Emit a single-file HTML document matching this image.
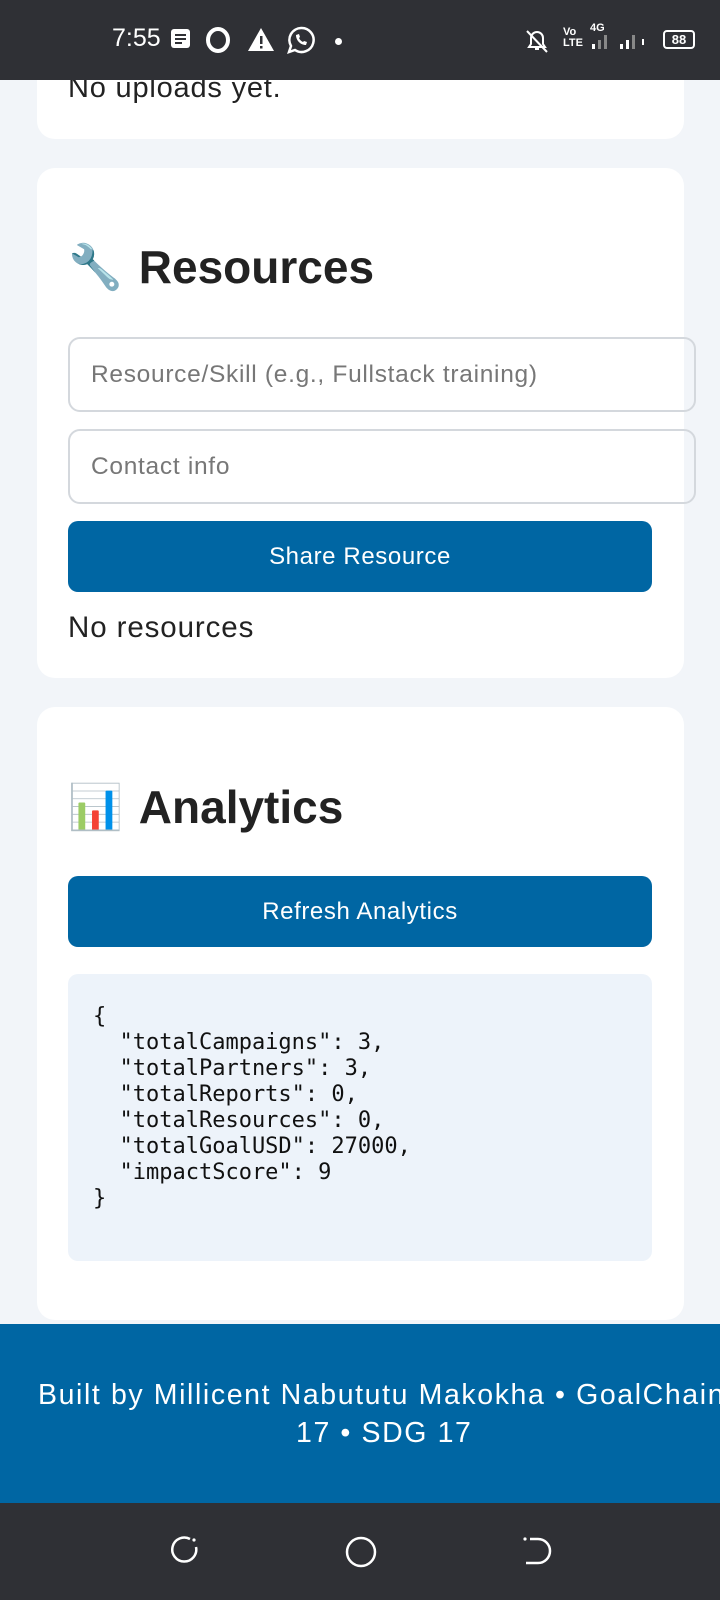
<!DOCTYPE html>
<html><head><meta charset="utf-8"><style>
*{box-sizing:border-box;margin:0;padding:0}
body{width:720px;height:1600px;overflow:hidden;background:#f2f5f9;font-family:"Liberation Sans",sans-serif;position:relative;color:#222}
.sb{position:absolute;left:0;top:0;width:720px;height:80px;background:#2f3035;color:#fff}
.card{position:absolute;left:37px;width:647px;background:#fff;border-radius:18px}
h2{position:absolute;left:31px;font-size:46px;font-weight:bold;color:#222;display:flex;align-items:center}
h2 span.e{font-size:44px;margin-right:16px}
.in{position:absolute;left:31px;width:628px;height:75px;border:2px solid #d4d8dd;border-radius:12px;font-size:24.5px;letter-spacing:0.7px;color:#777;padding-left:21px;line-height:71px}
.btn{position:absolute;left:31px;width:584px;height:71px;background:#0066a3;border-radius:10px;color:#fff;font-size:24px;letter-spacing:0.6px;text-align:center;line-height:71px}
pre{position:absolute;left:31px;width:584px;background:#edf3fa;border-radius:10px;font-family:"DejaVu Sans Mono","Liberation Mono",monospace;font-size:22px;line-height:26px;padding:30px 25px;color:#111}
.foot{position:absolute;left:0;top:1324px;width:720px;height:179px;background:#0066a3;color:#fff;font-size:28.5px;letter-spacing:1.6px;line-height:38px;white-space:nowrap}
.nav{position:absolute;left:0;top:1503px;width:720px;height:97px;background:#2f3035}
</style></head><body>
<div class="card" style="top:40px;height:99px"><div style="position:absolute;left:31px;top:32px;font-size:29px;letter-spacing:0.8px">No uploads yet.</div></div>
<div class="sb">
<div style="position:absolute;left:112px;top:24px;font-size:25px">7:55</div>
<svg style="position:absolute;left:170px;top:28px" width="22" height="22"><rect x="1" y="1" width="19" height="19" rx="3" fill="#fff"/><rect x="5" y="6" width="11" height="2" fill="#2f3035"/><rect x="5" y="10" width="11" height="2" fill="#2f3035"/><rect x="5" y="14" width="7" height="2" fill="#2f3035"/></svg>
<svg style="position:absolute;left:206px;top:27px" width="24" height="26"><ellipse cx="12" cy="13" rx="10" ry="11" fill="none" stroke="#fff" stroke-width="4"/></svg>
<svg style="position:absolute;left:247px;top:27px" width="28" height="25"><path d="M14 1 L27 24 L1 24 Z" fill="#fff"/><rect x="13" y="9" width="2.5" height="8" fill="#2f3035"/><rect x="13" y="19" width="2.5" height="2.5" fill="#2f3035"/></svg>
<svg style="position:absolute;left:286px;top:25px" width="30" height="30"><path d="M15 3a12 12 0 1 1 -6 22 l-6 2 2-6 a12 12 0 0 1 10-18z" fill="none" stroke="#fff" stroke-width="2.5"/><path d="M10 10c0 5 4 10 10 10l1-3-3-1-1 1c-2-1-3-2-4-4l1-1-1-3z" fill="#fff"/></svg>
<div style="position:absolute;left:335px;top:38px;width:7px;height:7px;border-radius:50%;background:#fff"></div>
<svg style="position:absolute;left:524px;top:28px" width="26" height="26"><path d="M5 19h16l-2-3v-6a6 6 0 0 0-12 0v6z M11 21h4" fill="none" stroke="#fff" stroke-width="2"/><path d="M3 3L23 24" stroke="#fff" stroke-width="2"/></svg>
<div style="position:absolute;left:563px;top:27px;font-size:11px;font-weight:bold;line-height:11px">Vo<br>LTE</div>
<div style="position:absolute;left:590px;top:22px;font-size:11px;font-weight:bold">4G</div>
<svg style="position:absolute;left:592px;top:30px" width="80" height="20"><rect x="0" y="14" width="3" height="5" fill="#fff"/><rect x="6" y="10" width="3" height="9" fill="#888"/><rect x="12" y="5" width="3" height="14" fill="#888"/><rect x="28" y="14" width="3" height="5" fill="#fff"/><rect x="34" y="10" width="3" height="9" fill="#fff"/><rect x="40" y="5" width="3" height="14" fill="#888"/><rect x="50" y="9" width="2" height="6" fill="#fff"/></svg>
<div style="position:absolute;left:663px;top:30px;width:32px;height:19px;border:2px solid #fff;border-radius:4px;font-size:13px;font-weight:bold;text-align:center;line-height:15px">88</div>
</div>
<div class="card" style="top:168px;height:510px">
<h2 style="top:72px"><span class="e">🔧</span>Resources</h2>
<div class="in" style="top:169px">Resource/Skill (e.g., Fullstack training)</div>
<div class="in" style="top:261px">Contact info</div>
<div class="btn" style="top:353px">Share Resource</div>
<div style="position:absolute;left:31px;top:443px;font-size:29.5px;letter-spacing:0.9px">No resources</div>
</div>
<div class="card" style="top:707px;height:613px">
<h2 style="top:73px"><span class="e">📊</span>Analytics</h2>
<div class="btn" style="top:169px">Refresh Analytics</div>
<pre style="top:267px;height:287px">{
  "totalCampaigns": 3,
  "totalPartners": 3,
  "totalReports": 0,
  "totalResources": 0,
  "totalGoalUSD": 27000,
  "impactScore": 9
}</pre>
</div>
<div class="foot"><div style="position:absolute;left:38px;top:52px">Built by Millicent Nabututu Makokha • GoalChain</div><div style="position:absolute;left:296px;top:90px">17 • SDG 17</div></div>
<div class="nav">
<svg style="position:absolute;left:168px;top:32px" width="32" height="32"><path d="M22 4 A12 12 0 1 0 28 12" fill="none" stroke="#fff" stroke-width="2.5"/><circle cx="26" cy="5" r="1.6" fill="#fff"/></svg>
<svg style="position:absolute;left:344px;top:32px" width="34" height="34"><circle cx="17" cy="17" r="14" fill="none" stroke="#fff" stroke-width="2.5"/></svg>
<svg style="position:absolute;left:520px;top:32px" width="32" height="32"><path d="M10 4 H18 A10 10 0 0 1 18 28 H6" fill="none" stroke="#fff" stroke-width="2.5"/><circle cx="5" cy="4" r="1.6" fill="#fff"/></svg>
</div>
</body></html>
